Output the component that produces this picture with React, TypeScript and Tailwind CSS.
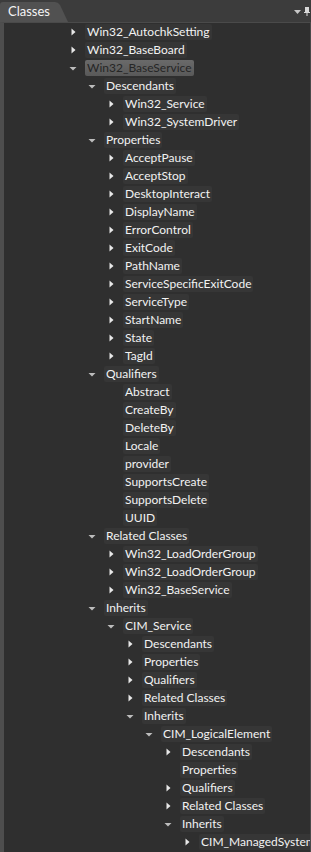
import React from 'react';

type Node = { label: string; arrow?: 'open' | 'closed'; selected?: boolean; children?: Node[] };

const leaf = (label: string): Node => ({ label, arrow: 'closed' });
const plain = (label: string): Node => ({ label });

const tree: Node[] = [
  leaf('Win32_AutochkSetting'),
  leaf('Win32_BaseBoard'),
  {
    label: 'Win32_BaseService',
    arrow: 'open',
    selected: true,
    children: [
      { label: 'Descendants', arrow: 'open', children: [leaf('Win32_Service'), leaf('Win32_SystemDriver')] },
      {
        label: 'Properties',
        arrow: 'open',
        children: [
          'AcceptPause', 'AcceptStop', 'DesktopInteract', 'DisplayName', 'ErrorControl', 'ExitCode',
          'PathName', 'ServiceSpecificExitCode', 'ServiceType', 'StartName', 'State', 'TagId',
        ].map(leaf),
      },
      {
        label: 'Qualifiers',
        arrow: 'open',
        children: ['Abstract', 'CreateBy', 'DeleteBy', 'Locale', 'provider', 'SupportsCreate', 'SupportsDelete', 'UUID'].map(plain),
      },
      {
        label: 'Related Classes',
        arrow: 'open',
        children: [leaf('Win32_LoadOrderGroup'), leaf('Win32_LoadOrderGroup'), leaf('Win32_BaseService')],
      },
      {
        label: 'Inherits',
        arrow: 'open',
        children: [
          {
            label: 'CIM_Service',
            arrow: 'open',
            children: [
              leaf('Descendants'),
              leaf('Properties'),
              leaf('Qualifiers'),
              leaf('Related Classes'),
              {
                label: 'Inherits',
                arrow: 'open',
                children: [
                  {
                    label: 'CIM_LogicalElement',
                    arrow: 'open',
                    children: [
                      leaf('Descendants'),
                      plain('Properties'),
                      leaf('Qualifiers'),
                      leaf('Related Classes'),
                      { label: 'Inherits', arrow: 'open', children: [leaf('CIM_ManagedSystemElement')] },
                    ],
                  },
                ],
              },
            ],
          },
        ],
      },
    ],
  },
];

type Row = { node: Node; level: number };

const flatten = (nodes: Node[], level: number, out: Row[]) => {
  nodes.forEach((n) => {
    out.push({ node: n, level });
    if (n.children) flatten(n.children, level + 1, out);
  });
  return out;
};

const Closed = () => (
  <svg width="5" height="8" viewBox="0 0 5 8">
    <path d="M0.5 0.5 L4.5 4 L0.5 7.5 Z" fill="#e8e8e8" />
  </svg>
);

const Open = () => (
  <svg width="8" height="5" viewBox="0 0 8 5">
    <path d="M0.5 1 L7.5 1 L4 4.5 Z" fill="#bdbdbd" />
  </svg>
);

const TreeRow: React.FC<Row> = ({ node, level }) => {
  // indentation is data driven, one step of 19px per level
  const pad = 64 + level * 19;
  return (
    <div className="flex h-[18px] items-center whitespace-nowrap" style={{ paddingLeft: pad }}>
      <div className="flex w-[10px] shrink-0 items-center justify-center">
        {node.arrow === 'closed' && <Closed />}
        {node.arrow === 'open' && <Open />}
      </div>
      <span
        className={
          node.selected
            ? 'ml-[7px] h-[16px] rounded-[2px] bg-gradient-to-b from-[#6a6a6a] to-[#595959] px-[2px] leading-[16px] text-[#262626]'
            : 'ml-[7px] h-[16px] rounded-[2px] bg-[#363636] px-[2px] leading-[16px] text-[#f2f2f2]'
        }
      >
        {node.label}
      </span>
    </div>
  );
};

export default function App() {
  const rows = flatten(tree, 0, []);
  return (
    <div className="flex h-[852px] w-[311px] flex-col overflow-hidden bg-[#3c3c3c] font-['Lato','Noto_Sans',sans-serif] text-[12px]">
      <div className="flex h-[22px] shrink-0 items-end justify-between">
        <div className="flex h-[20px] items-stretch">
          <div className="flex items-center rounded-tl-[3px] bg-[#515151] pl-[8px] pr-[2px] text-[13px] text-[#f5f5f5]">
            Classes
          </div>
          <svg width="16" height="20" viewBox="0 0 16 20" className="block">
            <path d="M0 0 L3 0 Q6 0 8 3 L16 20 L0 20 Z" fill="#515151" />
          </svg>
        </div>
        <div className="mb-[6px] flex items-center gap-[3px] pr-[1px]">
          <svg width="7" height="4" viewBox="0 0 7 4">
            <path d="M0 0 L7 0 L3.5 4 Z" fill="#c8c8c8" />
          </svg>
          <svg width="6" height="9" viewBox="0 0 6 9">
            <rect x="1" y="0" width="4" height="5" fill="#d8d8d8" />
            <rect x="0" y="5" width="6" height="1" fill="#d8d8d8" />
            <rect x="2.5" y="6" width="1" height="3" fill="#d8d8d8" />
          </svg>
        </div>
      </div>
      <div className="flex flex-1 border-l-[4px] border-r-[1px] border-t-[1px] border-l-[#4e4e4e] border-r-[#4a4a4a] border-t-[#4a4a4a] bg-[#2f2f2f]">
        <div className="w-full overflow-hidden">
          {rows.map((r, i) => (
            <TreeRow key={i} {...r} />
          ))}
        </div>
      </div>
    </div>
  );
}
